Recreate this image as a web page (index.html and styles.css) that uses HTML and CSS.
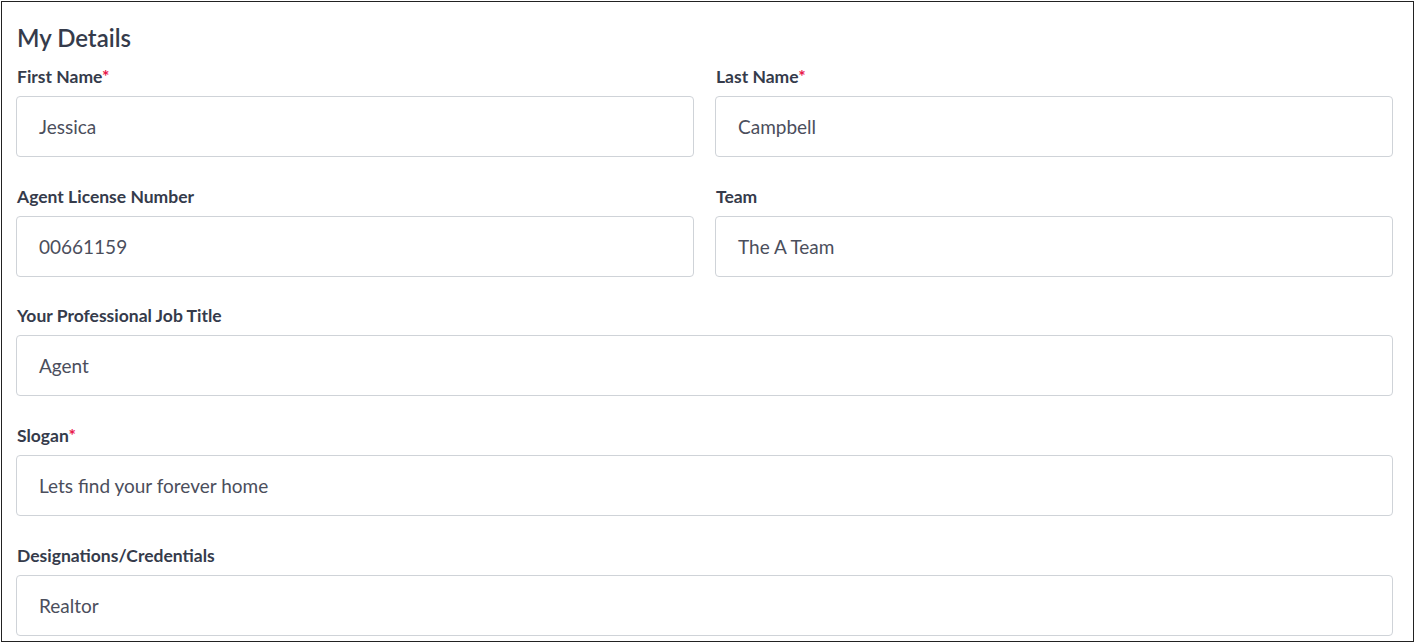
FILE: index.html
```html
<!DOCTYPE html>
<html lang="en">
<head>
  <meta charset="UTF-8">
  <meta name="viewport" content="width=device-width, initial-scale=1.0">
  <title>My Details</title>
  <link rel="stylesheet" href="styles.css">
</head>
<body>
<div class="frame">
  <h1 class="title">My Details</h1>

  <div class="row two">
    <div class="field">
      <label>First Name<span class="req">*</span></label>
      <div class="input">Jessica</div>
    </div>
    <div class="field">
      <label>Last Name<span class="req">*</span></label>
      <div class="input">Campbell</div>
    </div>
  </div>

  <div class="row two">
    <div class="field">
      <label>Agent License Number</label>
      <div class="input">00661159</div>
    </div>
    <div class="field">
      <label>Team</label>
      <div class="input">The A Team</div>
    </div>
  </div>

  <div class="row">
    <div class="field">
      <label>Your Professional Job Title</label>
      <div class="input">Agent</div>
    </div>
  </div>

  <div class="row">
    <div class="field">
      <label>Slogan<span class="req">*</span></label>
      <div class="input">Lets find your forever home</div>
    </div>
  </div>

  <div class="row">
    <div class="field">
      <label>Designations/Credentials</label>
      <div class="input">Realtor</div>
    </div>
  </div>
</div>
</body>
</html>
```

FILE: styles.css
```css
body {
  margin: 0;
  padding: 1px 2px 1px 1px;
  font-family: Lato, "Noto Sans", sans-serif;
  background-color: #fff;
}
.frame {
  border: 1px solid #222;
  height: 641px;
  box-sizing: border-box;
  padding: 21px 20px 0 14px;
  overflow: hidden;
}
.title {
  margin: 0 0 13px 1px;
  font-size: 24px;
  font-weight: 600;
  color: #353b4b;
  line-height: 30px;
}
.row {
  display: grid;
  grid-template-columns: 1fr;
  margin-bottom: 28.7px;
}
.row.two {
  grid-template-columns: 1fr 1fr;
  column-gap: 21px;
}
.field label {
  display: block;
  margin: 0 0 8px 1px;
  font-size: 17.5px;
  font-weight: 700;
  color: #353b4b;
  line-height: 22px;
}
.req {
  color: #e8174a;
}
.input {
  height: 61px;
  box-sizing: border-box;
  border: 1px solid #cfd3d8;
  border-radius: 4px;
  padding: 0 22px;
  display: flex;
  align-items: center;
  font-size: 19px;
  color: #4b4e5c;
}
```
